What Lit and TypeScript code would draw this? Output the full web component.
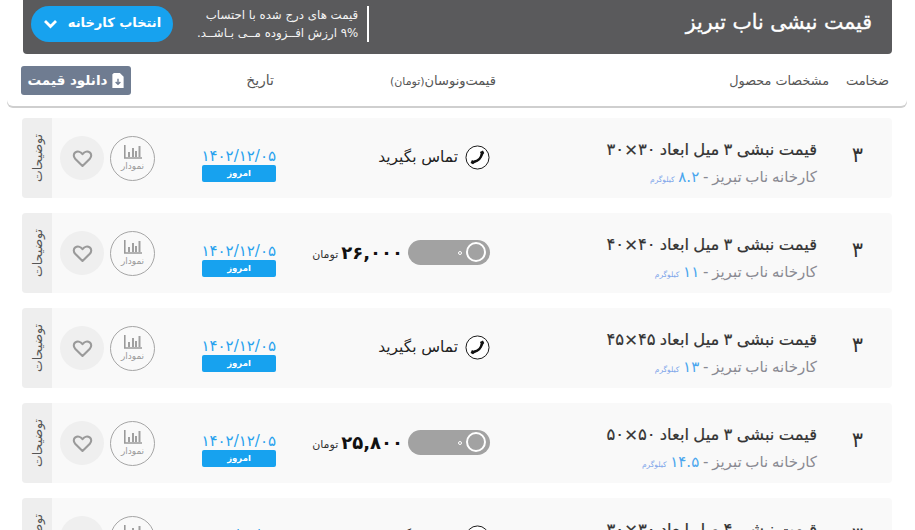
import { LitElement, html, css, svg } from "lit";
import { customElement } from "lit/decorators.js";

type Row = { title: string; weight: string; price?: string };
const rows: Row[] = [
  { title: "قیمت نبشی ۳ میل ابعاد ۳۰×۳۰", weight: "۸.۲" },
  { title: "قیمت نبشی ۳ میل ابعاد ۴۰×۴۰", weight: "۱۱", price: "۲۶,۰۰۰" },
  { title: "قیمت نبشی ۳ میل ابعاد ۴۵×۴۵", weight: "۱۳" },
  { title: "قیمت نبشی ۳ میل ابعاد ۵۰×۵۰", weight: "۱۴.۵", price: "۲۵,۸۰۰" },
  { title: "قیمت نبشی ۴ میل ابعاد ۳۰×۳۰", weight: "۱۰.۸" },
];

const heart = svg`<svg class="heart" viewBox="0 0 24 24" width="21" height="21" fill="none" stroke="#9a9a9a" stroke-width="2.4" stroke-linejoin="round"><path d="M12 20.5 3.6 12.2C1.4 10 1.6 6.6 3.8 5 6 3.4 9.6 3.8 12 7c2.400-3.200 6-3.600 8.200-2 2.200 1.600 2.400 5 .2 7.200Z"/></svg>`;
const chart = svg`<svg viewBox="0 0 18 14" width="18" height="14"><path d="M.8 0v13h17.200" fill="none" stroke="#9a9a9a" stroke-width="1.600"/><path d="M4 7h2v5H4zM8 3h2v9H8zM11 6h2v6h-2zM14.500 1h2v11h-2z" fill="#a0a0a0"/></svg>`;
const phone = svg`<svg viewBox="0 0 26 26" width="25" height="25"><circle cx="13" cy="13" r="12" fill="#fff" stroke="#111" stroke-width="1"/><path d="M17.500 9C17 13.500 13.500 17 9 17.500" fill="none" stroke="#111" stroke-width="2.600"/><path d="M15.500 7.200 18.700 5.800 20 8.300 17.800 11.500ZM7.200 15.500 5.800 18.700 8.300 20 11.500 17.800Z" fill="#111"/></svg>`;

@customElement("app-root")
export class AppRoot extends LitElement {
  static styles = css`
    :host { display: block; width: 915px; height: 530px; overflow: hidden; background: #fff;
      font-family: "DejaVu Sans", "Noto Sans", sans-serif; }
    .page { direction: rtl; display: flex; flex-direction: column; }
    .banner { margin: 0 23px; height: 54px; background: #5a5a5c; border-radius: 0 0 4px 4px;
      display: flex; align-items: center; color: #fff; }
    .banner h1 { margin: -10px 20px 0 0; font-size: 20.500px; font-weight: 400; -webkit-text-stroke: 0.35px #fff; flex: 1; color: #fff; white-space: nowrap; }
    .note { font-size: 11.800px; line-height: 18px; border-right: 2px solid #fff; padding-right: 9px;
      height: 36px; box-sizing: border-box; white-space: nowrap; margin-top: -6px; margin-left: 24px; color: #f4f4f4; }
    .choose { width: 142px; height: 36px; border-radius: 18px; background: #17a2ef; color: #fff;
      display: flex; align-items: center; justify-content: center; gap: 10px; font-size: 13px;
      font-weight: 700; margin-left: 8px; margin-top: -6px; flex: none; white-space: nowrap; }
    .choose span { margin-top: -4px; }
    .thead { height: 52px; margin: 0 8px 0 7px; border-radius: 0 0 6px 6px; box-shadow: 0 2px 0 #cfcfcf;
      display: flex; align-items: center; padding-right: 18px; font-size: 13px; color: #555; white-space: nowrap; }
    .c1 { width: 60px; flex: none; }
    .c2 { width: 333px; flex: none; font-size: 12.800px; }
    .c3 { width: 222px; flex: none; }
    .c3 small { font-size: 11px; }
    .c4 { width: 143px; flex: none; font-size: 14px; }
    .dl { width: 110px; height: 29px; background: #6f7c91; border-radius: 3px; color: #fff; font-size: 13.500px;
      font-weight: 700; display: flex; align-items: center; justify-content: center; gap: 5px; flex: none; }
    .dl svg { flex: none; }
    .list { display: flex; flex-direction: column; gap: 15px; margin: 12px 23px 0 22px; }
    .row { height: 80px; background: #f9f9f9; border-radius: 4px; display: flex; align-items: center; overflow: hidden; flex: none; }
    .thick { width: 75px; flex: none; text-align: center; font-size: 21px; color: #333; font-weight: 500; padding-left: 6px; box-sizing: border-box; margin-top: -6px; }
    .spec { width: 327px; flex: none; display: flex; flex-direction: column; gap: 8px; white-space: nowrap; margin-top: 15px; }
    .title { font-size: 16.400px; color: #333; line-height: 20px; word-spacing: -1px; margin-top: -3px; -webkit-text-stroke: 0.2px #333; }
    .sub { font-size: 15px; color: #8a8a92; line-height: 18px; word-spacing: -1px; }
    .sub b { font-weight: 400; color: #4aa6ee; }
    .sub small { font-size: 7.500px; color: #7da5ea; }
    .price { width: 214px; flex: none; display: flex; align-items: center; white-space: nowrap; margin-top: -2px; }
    .toggle { width: 82px; height: 25px; border-radius: 13px; background: #a2a2a2; position: relative; flex: none; margin-left: 5px; }
    .knob { position: absolute; right: 4px; top: 2px; border: 2px solid #fff; border-radius: 50%; box-sizing: border-box; width: 20px; height: 20px; }
    .dot { position: absolute; right: 28px; top: 11px; width: 4px; height: 4px; border-radius: 50%; border: 1px solid #fff; box-sizing: border-box; }
    .amount { font-size: 18px; font-weight: 700; color: #111; margin-left: 3px; }
    .unit { font-size: 11px; color: #333; margin-top: 4px; }
    .call { display: flex; align-items: center; gap: 7px; font-size: 15.400px; color: #222; }
    .call svg { flex: none; }
    .date { width: 74px; flex: none; display: flex; flex-direction: column; align-items: stretch; text-align: center; margin-top: 14px; }
    .date span { color: #27a1ee; font-size: 15px; line-height: 17px; font-weight: 500; white-space: nowrap; }
    .date i { height: 17px; background: #17a2ef; border-radius: 2px; color: #fff; font-style: normal; font-size: 8.500px; font-weight: 700; line-height: 16px; }
    .chart { width: 45px; height: 45px; flex: none; border-radius: 50%; border: 1px solid #a5a5a5; box-sizing: border-box; margin-right: 47px;
      display: flex; flex-direction: column; align-items: center; gap: 2px; color: #9a9a9a; font-size: 9px; padding-top: 8px; white-space: nowrap; }
    .fav { width: 44px; height: 44px; flex: none; border-radius: 50%; background: #efefef; margin-right: 6px; display: flex; align-items: center; justify-content: center; }
    .tab { width: 30px; flex: none; align-self: stretch; background: #eee; margin-right: 8px; display: flex; align-items: center; justify-content: center; }
    .tab span { writing-mode: vertical-rl; transform: rotate(180deg); font-size: 12.500px; color: #555; white-space: nowrap; display: block; }
  `;

  row(r: Row) {
    return html`<div class="row">
      <div class="thick">۳</div>
      <div class="spec">
        <div class="title">${r.title}</div>
        <div class="sub">کارخانه ناب تبریز - <b>${r.weight}</b> <small>کیلوگرم</small></div>
      </div>
      <div class="price">
        ${r.price
          ? html`<div class="toggle"><div class="knob"></div><div class="dot"></div></div>
              <div class="amount">${r.price}</div><div class="unit">تومان</div>`
          : html`<div class="call">${phone}<span>تماس بگیرید</span></div>`}
      </div>
      <div class="date"><span>۱۴۰۲/۱۲/۰۵</span><i>امروز</i></div>
      <div class="chart">${chart}<span>نمودار</span></div>
      <div class="fav">${heart}</div>
      <div class="tab"><span>توضیحات</span></div>
    </div>`;
  }

  render() {
    return html`<div class="page">
      <div class="banner">
        <h1>قیمت نبشی ناب تبریز</h1>
        <div class="note">قیمت های درج شده با احتساب<br />۹% ارزش افــزوده مــی بـاشــد.</div>
        <div class="choose"><span>انتخاب کارخانه</span>
          <svg viewBox="0 0 14 10" width="15" height="10"><path d="M1.500 2 7 7.500 12.500 2" fill="none" stroke="#fff" stroke-width="2.800"/></svg>
        </div>
      </div>
      <div class="thead">
        <div class="c1">ضخامت</div>
        <div class="c2">مشخصات محصول</div>
        <div class="c3">قیمت‌ونوسان<small>(تومان)</small></div>
        <div class="c4">تاریخ</div>
        <div class="dl"><svg viewBox="0 0 12 16" width="12" height="15"><path d="M0 1.500 1.500 0H8l4 4v12H0Z" fill="#fff"/><path d="M6 6v6M3.500 9.500 6 12l2.500-2.500" fill="none" stroke="#6f7c91" stroke-width="1.500"/></svg><span>دانلود قیمت</span></div>
      </div>
      <div class="list">${rows.map((r) => this.row(r))}</div>
    </div>`;
  }
}
